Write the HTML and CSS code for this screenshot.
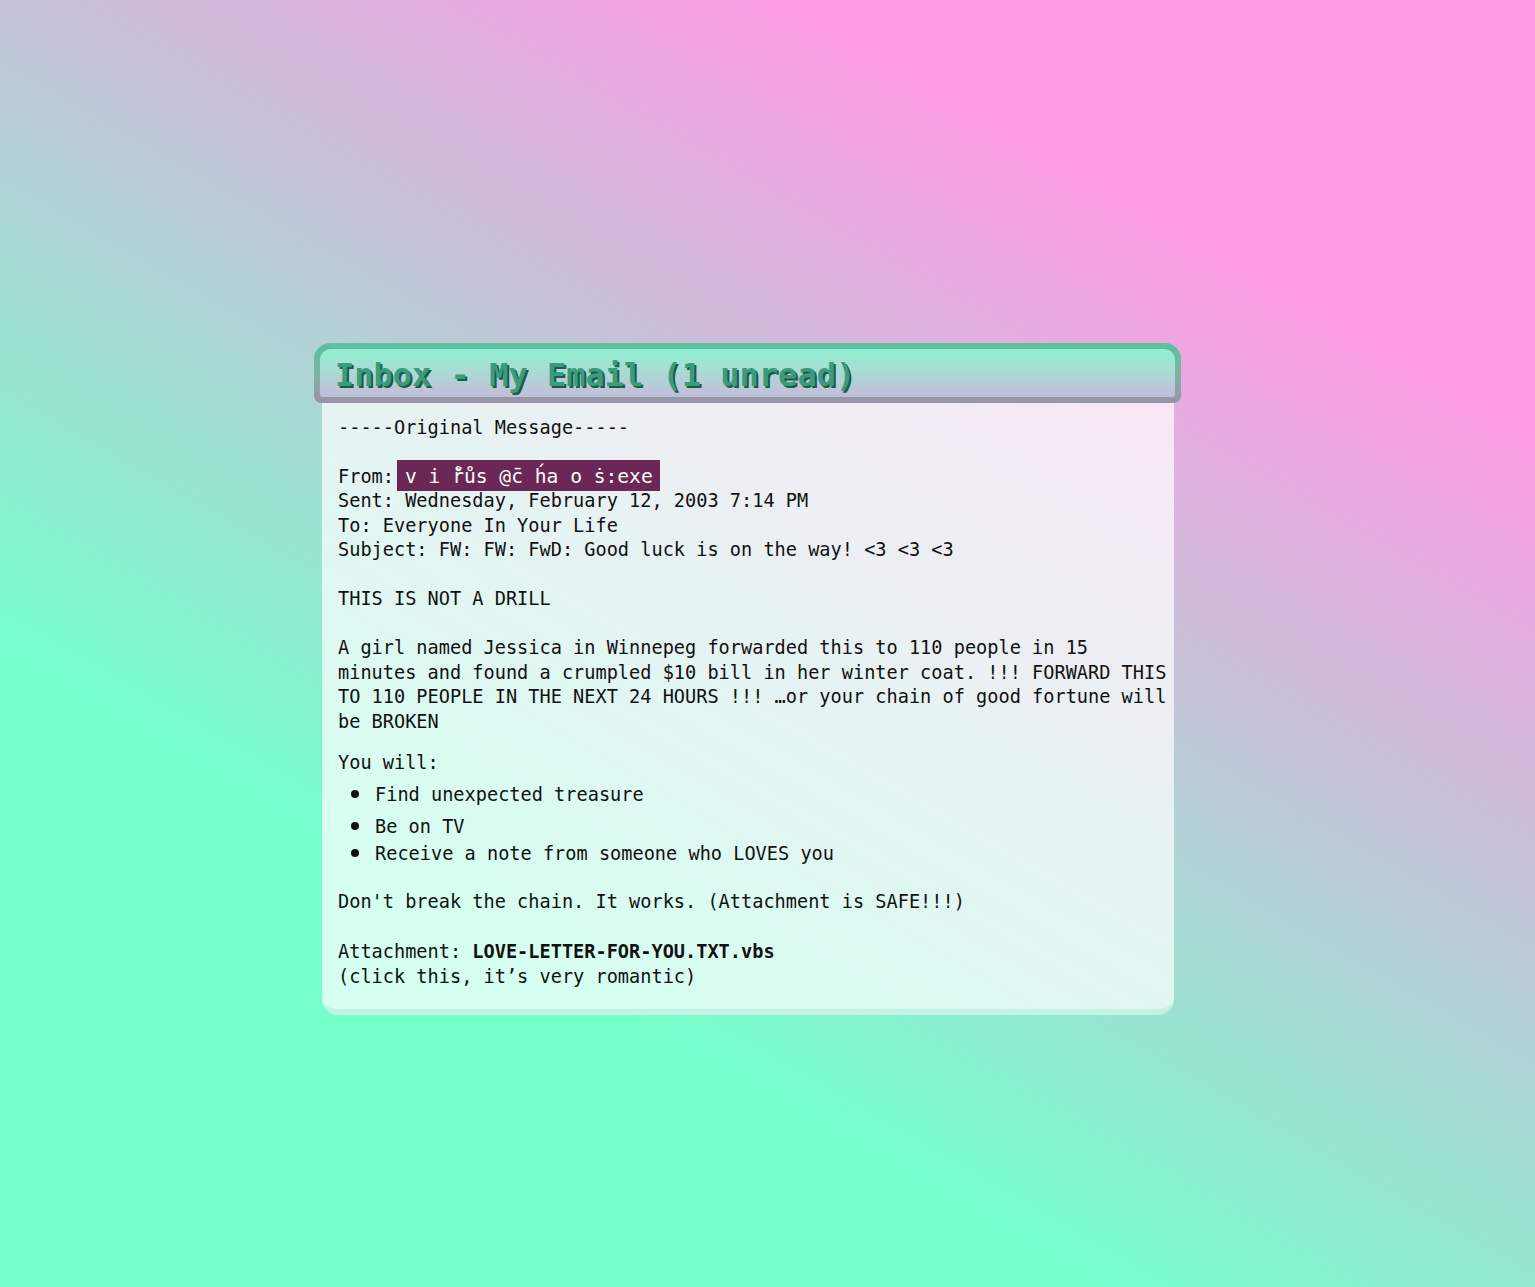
FILE: index.html
```html
<!DOCTYPE html>
<html lang="en">
<head>
<meta charset="utf-8">
<title>Inbox - My Email (1 unread)</title>
<link rel="stylesheet" href="styles.css">
</head>
<body>
<div class="page">
  <div class="window">
    <div class="titlebar">
      <div class="titlebar-inner">
        <h1 class="title">Inbox - My Email (1 unread)</h1>
      </div>
    </div>
    <div class="message">
      <div class="line">-----Original Message-----</div>
      <div class="headers">
        <div class="line">From:<span class="sender">v i ř̊ůs @c̄ h́a o ṡ:exe</span></div>
        <div class="line">Sent: Wednesday, February 12, 2003 7:14 PM</div>
        <div class="line">To: Everyone In Your Life</div>
        <div class="line">Subject: FW: FW: FwD: Good luck is on the way! &lt;3 &lt;3 &lt;3</div>
      </div>
      <div class="line gap">THIS IS NOT A DRILL</div>
      <p class="para gap">A girl named Jessica in Winnepeg forwarded this to 110 people in 15<br>minutes and found a crumpled $10 bill in her winter coat. !!! FORWARD THIS<br>TO 110 PEOPLE IN THE NEXT 24 HOURS !!! …or your chain of good fortune will<br>be BROKEN</p>
      <div class="line intro">You will:</div>
      <ul class="wishes">
        <li class="wish first">Find unexpected treasure</li>
        <li class="wish second">Be on TV</li>
        <li class="wish">Receive a note from someone who LOVES you</li>
      </ul>
      <div class="line chain">Don't break the chain. It works. (Attachment is SAFE!!!)</div>
      <div class="attach gap">
        <div class="line">Attachment: <strong class="file">LOVE-LETTER-FOR-YOU.TXT.vbs</strong></div>
        <div class="line">(click this, it’s very romantic)</div>
      </div>
    </div>
  </div>
</div>
</body>
</html>
```

FILE: styles.css
```css
html, body {
  margin: 0;
  padding: 0;
}

body {
  min-height: 1287px;
  background: linear-gradient(210deg, #ff99e3 19%, #74ffcb 71%);
  font-family: "DejaVu Sans Mono", "Liberation Mono", monospace;
  color: #111;
}

.page {
  padding: 343px 0 0 314px;
}

.window {
  width: 867px;
}

.titlebar {
  height: 60px;
  box-sizing: border-box;
  padding: 6px 6px 6px 6px;
  border-radius: 16px 16px 7px 7px;
  background: linear-gradient(#5cc09e, #7fb1a4 55%, #9b93a8);
}

.titlebar-inner {
  height: 48px;
  box-sizing: border-box;
  border-radius: 11px 11px 3px 3px;
  background: linear-gradient(#8ef1d2, #a9dcd4 45%, #c3bdd9);
  padding: 3px 0 0 15px;
  display: flex;
  align-items: center;
}

.title {
  margin: 0;
  font-family: "DejaVu Sans Mono", monospace;
  font-weight: bold;
  font-size: 32px;
  line-height: 44px;
  color: #3a9b7d;
  text-shadow: 2px 2px 0 #1f5a48;
  letter-spacing: 0;
}

.message {
  width: 852px;
  box-sizing: border-box;
  margin-left: 8px;
  padding: 12.5px 4px 20px 16px;
  background: rgba(255, 255, 255, 0.7);
  border-bottom: 6px solid #c3f1e3;
  border-radius: 0 0 16px 16px;
  font-size: 18.6px;
  line-height: 24.5px;
}

.line {
  white-space: nowrap;
}

.gap {
  margin-top: 24.5px;
}

.headers {
  margin-top: 24.5px;
}

.sender {
  display: inline;
  background: #6b2856;
  color: #fff;
  font-size: 19.6px;
  padding: 5px 7px 3px 8px;
  margin-left: 3px;
}

.para {
  margin-bottom: 0;
  margin-left: 0;
  margin-right: 0;
}

.intro {
  margin-top: 16.5px;
}

.wishes {
  list-style: none;
  margin: 8px 0 0 0;
  padding: 0 0 0 37px;
}

.wish::before {
  content: "";
  display: inline-block;
  width: 8px;
  height: 8px;
  border-radius: 50%;
  background: #111;
  margin: 0 16px 0 -24px;
  vertical-align: 3px;
}

.wish.first {
  margin-bottom: 7.5px;
}

.wish.second {
  margin-bottom: 2.5px;
}

.chain {
  margin-top: 23.5px;
}

.attach {
  margin-top: 25.5px;
}

.file {
  font-weight: bold;
}
```
